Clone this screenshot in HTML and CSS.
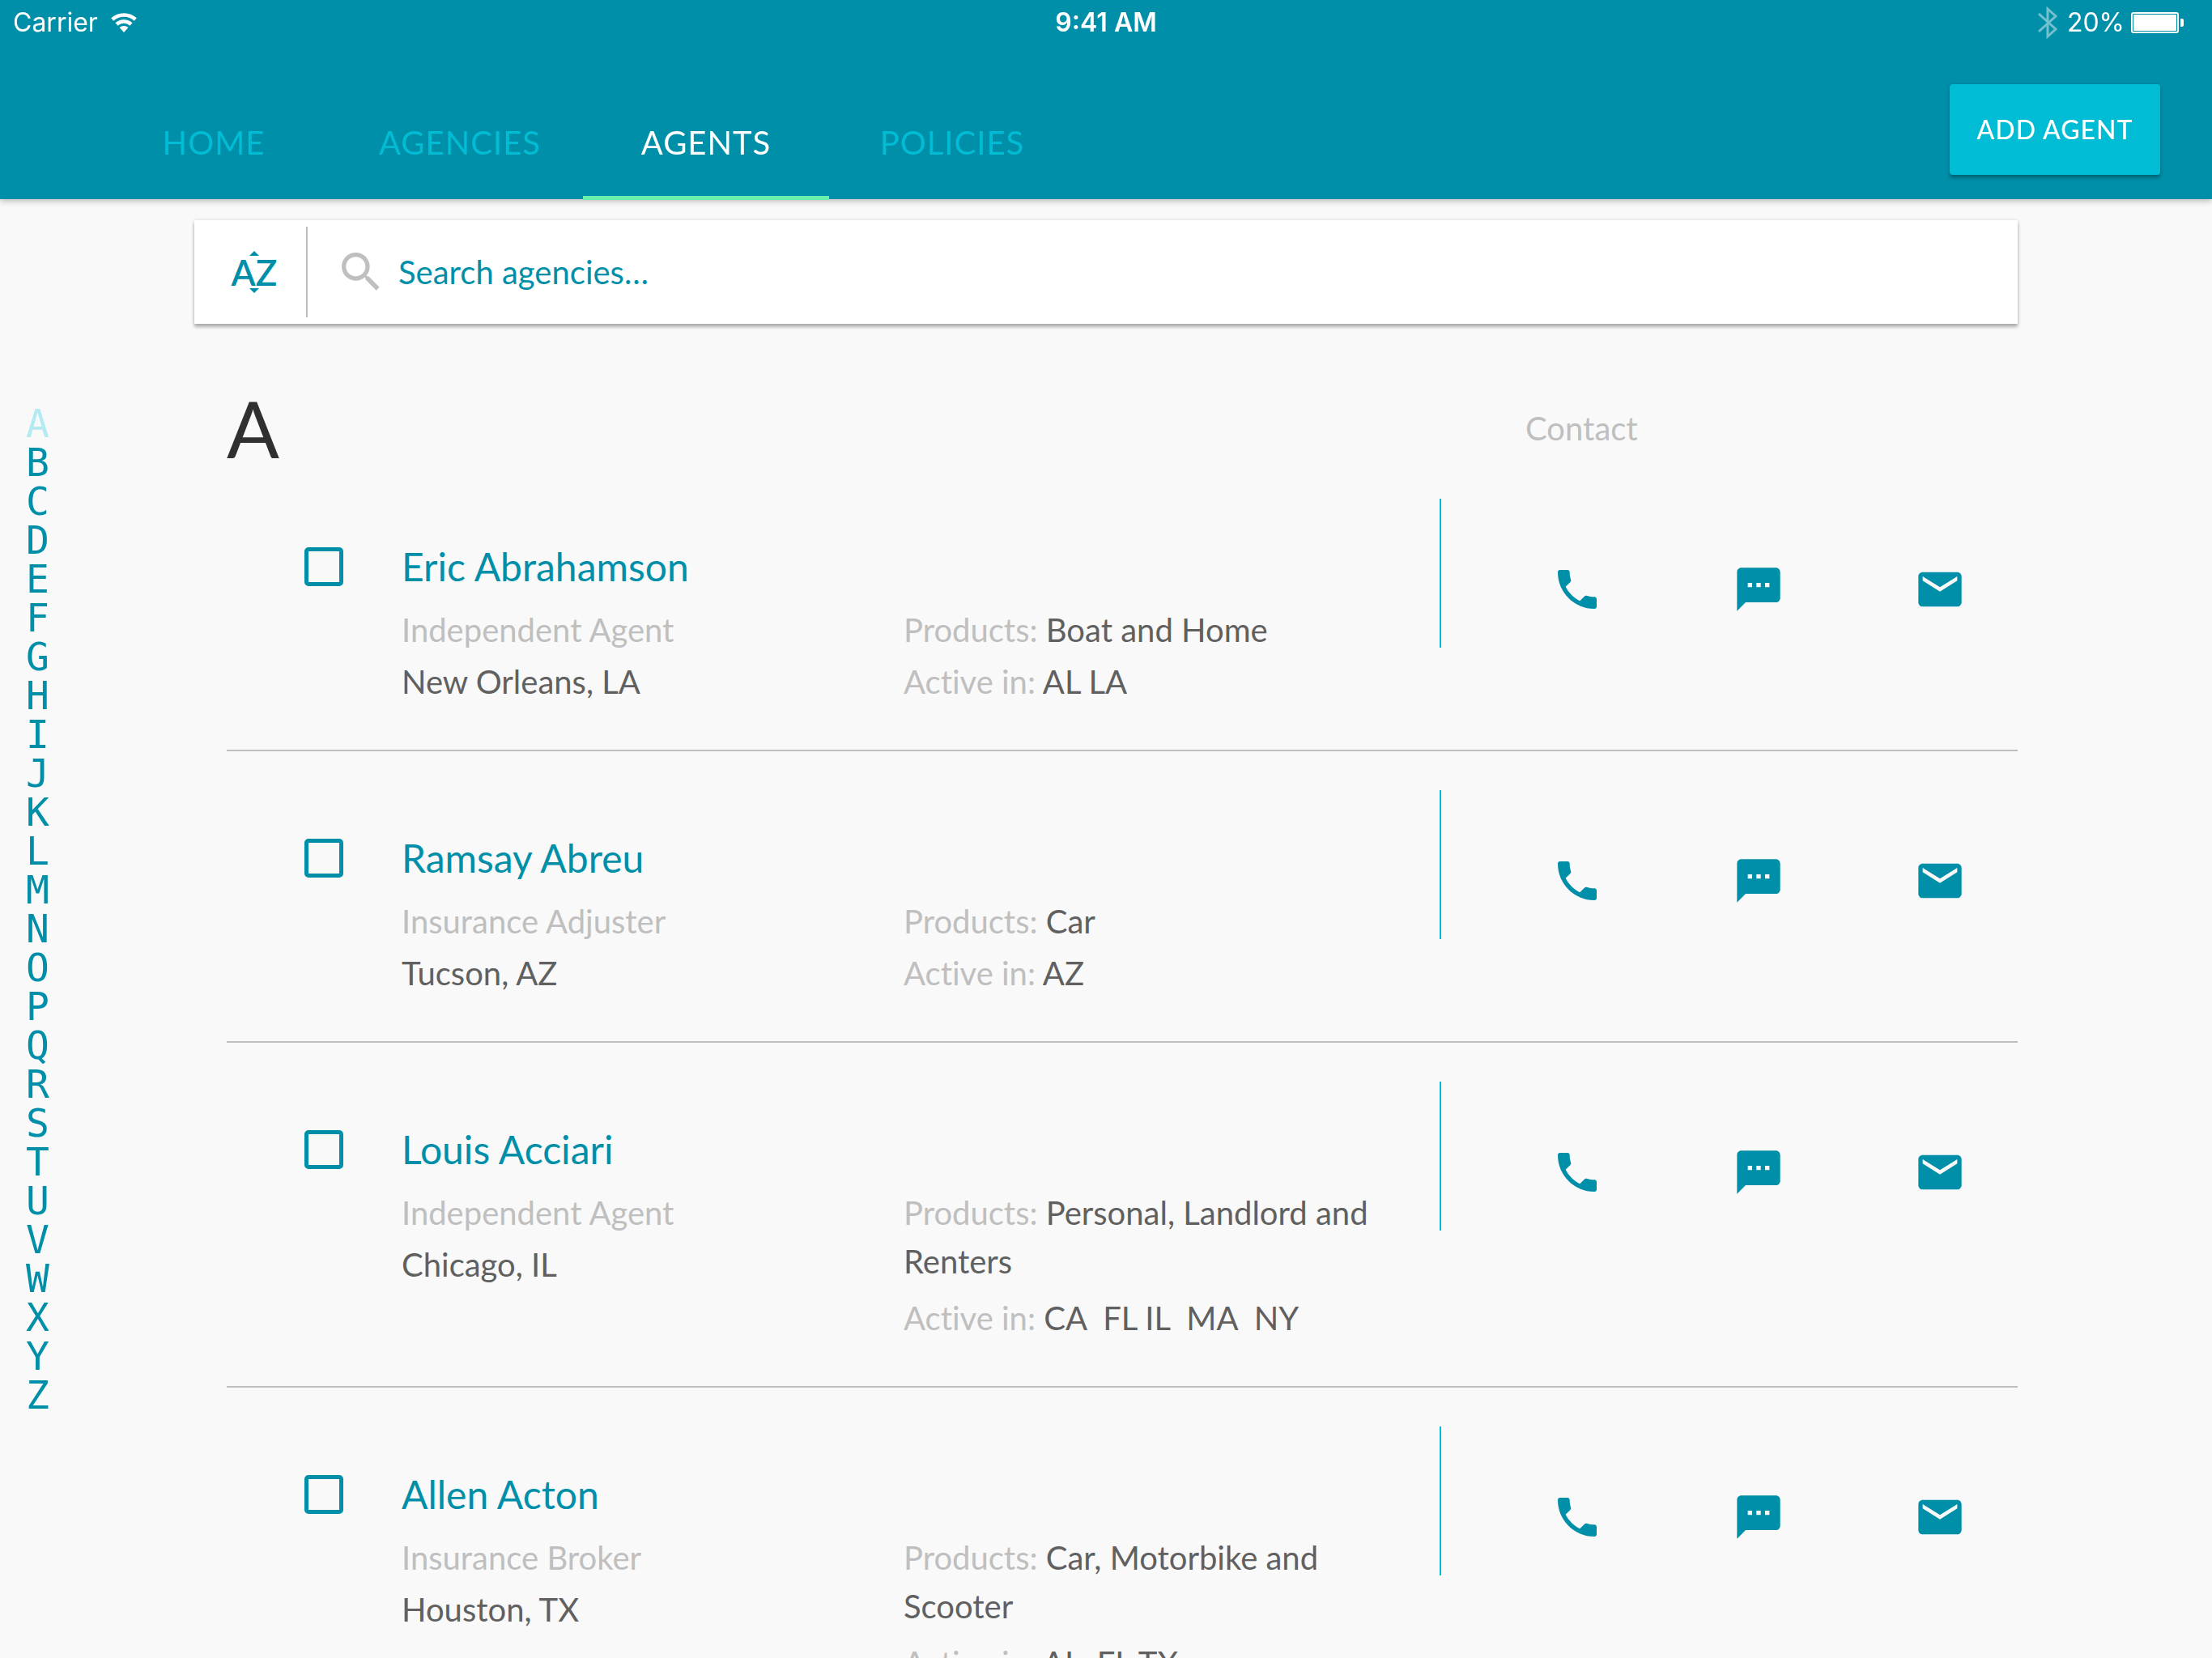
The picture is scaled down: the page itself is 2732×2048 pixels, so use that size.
FILE: index.html
```html
<!DOCTYPE html>
<html lang="en">
<head>
<meta charset="utf-8">
<meta name="viewport" content="width=device-width, initial-scale=1">
<title>Agents</title>
<link rel="stylesheet" href="styles.css">
</head>
<body>
<svg class="sprite" aria-hidden="true">
  <symbol id="phone" viewBox="0 0 24 24"><path d="M6.62 10.79c1.44 2.83 3.76 5.14 6.59 6.59l2.2-2.2c.27-.27.67-.36 1.02-.24 1.12.37 2.33.57 3.57.57.55 0 1 .45 1 1V20c0 .55-.45 1-1 1-9.39 0-17-7.61-17-17 0-.55.45-1 1-1h3.5c.55 0 1 .45 1 1 0 1.25.2 2.45.57 3.57.11.35.03.74-.25 1.02l-2.2 2.2z"/></symbol>
  <symbol id="message" viewBox="0 0 24 24"><path d="M20 2H4c-1.1 0-1.99.9-1.99 2L2 22l4-4h14c1.1 0 2-.9 2-2V4c0-1.1-.9-2-2-2z"/><path class="icon-cut" d="M7 9h2v2H7zM11 9h2v2h-2zM15 9h2v2h-2z"/></symbol>
  <symbol id="mail" viewBox="0 0 24 24"><path d="M20 4H4c-1.1 0-1.99.9-1.99 2L2 18c0 1.1.9 2 2 2h16c1.1 0 2-.9 2-2V6c0-1.1-.9-2-2-2z"/><path class="icon-cut" d="M20 8l-8 5-8-5V6l8 5 8-5v2z"/></symbol>
</svg>

<div class="app">
  <header class="header">
    <div class="status">
      <div class="status-left">
        <span>Carrier</span>
        <svg class="wifi" viewBox="0 0 32 24" aria-hidden="true"><path d="M1.7 8A21.5 21.5 0 0 1 30.3 8M7 14A13.5 13.5 0 0 1 25 14" fill="none" stroke="currentColor" stroke-width="4.6"/><path d="M16 24l-5.4-6A8 8 0 0 1 21.4 18z"/></svg>
      </div>
      <time class="status-time">9:41 AM</time>
      <div class="status-right">
        <svg class="bluetooth" viewBox="0 0 24 40" aria-hidden="true"><path d="M1 9l21 19-10 9V3l10 9L1 31" fill="none" stroke="currentColor" stroke-width="3"/></svg>
        <span>20%</span>
        <svg class="battery" viewBox="0 0 66 26" aria-hidden="true"><rect x="1" y="1" width="57" height="24" rx="2" fill="none" stroke="currentColor" stroke-width="2"/><rect x="3" y="3" width="53" height="20" rx="1"/><path d="M61 8h2q2 0 2 2v6q0 2-2 2h-2z"/></svg>
      </div>
    </div>
    <div class="bar">
      <nav class="tabs">
        <a class="tab" href="#home">HOME</a>
        <a class="tab" href="#agencies">AGENCIES</a>
        <a class="tab tab-active" href="#agents" aria-current="page">AGENTS</a>
        <a class="tab" href="#policies">POLICIES</a>
      </nav>
      <button class="add" type="button">ADD AGENT</button>
    </div>
  </header>

  <div class="body">
    <nav class="index" aria-label="Jump to letter">
      <a class="current" href="#A">A</a><a href="#B">B</a><a href="#C">C</a><a href="#D">D</a><a href="#E">E</a><a href="#F">F</a><a href="#G">G</a><a href="#H">H</a><a href="#I">I</a><a href="#J">J</a><a href="#K">K</a><a href="#L">L</a><a href="#M">M</a><a href="#N">N</a><a href="#O">O</a><a href="#P">P</a><a href="#Q">Q</a><a href="#R">R</a><a href="#S">S</a><a href="#T">T</a><a href="#U">U</a><a href="#V">V</a><a href="#W">W</a><a href="#X">X</a><a href="#Y">Y</a><a href="#Z">Z</a>
    </nav>

    <main class="content">
      <form class="search" role="search">
        <button class="sort" type="button" aria-label="Sort A to Z">
          <svg class="arrow" viewBox="0 0 12 6" aria-hidden="true"><path d="M0 6l6-6 6 6z"/></svg>
          <span>AZ</span>
          <svg class="arrow" viewBox="0 0 12 6" aria-hidden="true"><path d="M0 0l6 6 6-6z"/></svg>
        </button>
        <label class="search-label" for="q" aria-label="Search">
          <svg class="icon" viewBox="0 0 24 24" aria-hidden="true"><path d="M15.5 14h-.79l-.28-.27C15.41 12.59 16 11.11 16 9.5 16 5.91 13.09 3 9.5 3S3 5.91 3 9.5 5.91 16 9.5 16c1.61 0 3.09-.59 4.23-1.57l.27.28v.79l5 4.99L20.49 19l-4.99-5zm-6 0C7.01 14 5 11.99 5 9.5S7.01 5 9.5 5 14 7.01 14 9.5 11.99 14 9.5 14z"/></svg>
        </label>
        <input class="search-input" id="q" type="text" placeholder="Search agencies…">
      </form>

      <section class="group" id="A">
        <div class="group-head">
          <h1 class="letter">A</h1>
          <h2 class="contact-title">Contact</h2>
        </div>

        <article class="agent">
          <div class="pick"><input type="checkbox" id="a1"></div>
          <div class="info">
            <label class="name" for="a1">Eric Abrahamson</label>
            <p class="role">Independent Agent</p>
            <p>New Orleans, LA</p>
          </div>
          <div class="cover">
            <p><span class="key">Products:</span> Boat and Home</p>
            <p><span class="key">Active in:</span> AL LA</p>
          </div>
          <div class="contact">
            <a href="#call" aria-label="Call"><svg class="icon"><use href="#phone"/></svg></a>
            <a href="#message" aria-label="Message"><svg class="icon"><use href="#message"/></svg></a>
            <a href="#mail" aria-label="Email"><svg class="icon"><use href="#mail"/></svg></a>
          </div>
        </article>

        <article class="agent">
          <div class="pick"><input type="checkbox" id="a2"></div>
          <div class="info">
            <label class="name" for="a2">Ramsay Abreu</label>
            <p class="role">Insurance Adjuster</p>
            <p>Tucson, AZ</p>
          </div>
          <div class="cover">
            <p><span class="key">Products:</span> Car</p>
            <p><span class="key">Active in:</span> AZ</p>
          </div>
          <div class="contact">
            <a href="#call" aria-label="Call"><svg class="icon"><use href="#phone"/></svg></a>
            <a href="#message" aria-label="Message"><svg class="icon"><use href="#message"/></svg></a>
            <a href="#mail" aria-label="Email"><svg class="icon"><use href="#mail"/></svg></a>
          </div>
        </article>

        <article class="agent">
          <div class="pick"><input type="checkbox" id="a3"></div>
          <div class="info">
            <label class="name" for="a3">Louis Acciari</label>
            <p class="role">Independent Agent</p>
            <p>Chicago, IL</p>
          </div>
          <div class="cover cover-long">
            <p><span class="key">Products:</span> Personal, Landlord and Renters</p>
            <p><span class="key">Active in:</span> CA&nbsp; FL IL&nbsp; MA&nbsp; NY</p>
          </div>
          <div class="contact">
            <a href="#call" aria-label="Call"><svg class="icon"><use href="#phone"/></svg></a>
            <a href="#message" aria-label="Message"><svg class="icon"><use href="#message"/></svg></a>
            <a href="#mail" aria-label="Email"><svg class="icon"><use href="#mail"/></svg></a>
          </div>
        </article>

        <article class="agent">
          <div class="pick"><input type="checkbox" id="a4"></div>
          <div class="info">
            <label class="name" for="a4">Allen Acton</label>
            <p class="role">Insurance Broker</p>
            <p>Houston, TX</p>
          </div>
          <div class="cover cover-long">
            <p><span class="key">Products:</span> Car, Motorbike and Scooter</p>
            <p><span class="key">Active in:</span> AL&nbsp; FL TX</p>
          </div>
          <div class="contact">
            <a href="#call" aria-label="Call"><svg class="icon"><use href="#phone"/></svg></a>
            <a href="#message" aria-label="Message"><svg class="icon"><use href="#message"/></svg></a>
            <a href="#mail" aria-label="Email"><svg class="icon"><use href="#mail"/></svg></a>
          </div>
        </article>
      </section>
    </main>
  </div>
</div>
</body>
</html>
```
FILE: styles.css
```css
:root {
  --teal: #008fa9;
  --cyan: #00bcd4;
  --grey: #bfbfbf;
  --text: #606060;
  --page: #f9f9f9;
}

* { box-sizing: border-box; }

body {
  margin: 0;
  background: var(--page);
  color: var(--text);
  font: 400 40px/60px Lato, "Liberation Sans", sans-serif;
  font-variant-ligatures: none;
}

p, h1, h2 { margin: 0; font-weight: 400; }
a { color: inherit; text-decoration: none; }
button, input { font: inherit; color: inherit; border: 0; padding: 0; background: none; }
svg { display: block; fill: currentColor; }
.sprite { display: none; }
.icon { width: 64px; height: 64px; }
.icon-cut { fill: var(--page); }

.app {
  display: flex;
  flex-direction: column;
  height: 100vh;
}

/* Header */
.header {
  position: relative;
  z-index: 1;
  flex: none;
  background: var(--teal);
  color: #fff;
  box-shadow: 0 2px 8px rgba(0, 0, 0, .28);
}

.status {
  display: grid;
  grid-template-columns: 1fr auto 1fr;
  align-items: center;
  height: 56px;
  padding: 0 16px;
  font: 400 32px/56px Inter, "Liberation Sans", sans-serif;
}
.status-left, .status-right { display: flex; align-items: center; }
.status-left { gap: 16px; }
.status-right { justify-content: flex-end; gap: 8px; padding-right: 18px; }
.status-time { font-weight: 600; }
.wifi { width: 32px; height: 24px; }
.bluetooth { width: 24px; height: 40px; margin-right: 4px; opacity: .45; }
.battery { width: 66px; height: 26px; }

.bar {
  display: flex;
  justify-content: space-between;
  align-items: flex-end;
  height: 190px;
  padding: 0 64px 0 112px;
}
.tabs { display: flex; margin-bottom: -1px; }
.tab {
  width: 304px;
  padding-bottom: 36px;
  border-bottom: 5px solid transparent;
  color: var(--cyan);
  letter-spacing: 1px;
  text-align: center;
}
.tab-active { color: #fff; border-color: #69f0ae; }
.add {
  align-self: flex-start;
  min-width: 260px;
  height: 112px;
  margin-top: 48px;
  border-radius: 4px;
  background: var(--cyan);
  box-shadow: 0 4px 4px rgba(0, 0, 0, .26), 0 0 4px rgba(0, 0, 0, .12);
  font-size: 32px;
  font-weight: 500;
  letter-spacing: 1px;
}

/* Body */
.body {
  flex: 1;
  min-height: 0;
  display: grid;
  grid-template-columns: 240px minmax(0, 1fr);
  overflow-y: auto;
  scrollbar-width: none;
}

.index {
  position: sticky;
  top: 0;
  align-self: start;
  display: flex;
  flex-direction: column;
  align-items: flex-start;
  padding: 253px 0 0 32px;
  color: var(--teal);
  font: 48px/48px "DejaVu Sans Mono", monospace;
}
.current { color: #b2ebf2; }

.content { padding: 26px 240px 0 0; }

.search {
  display: flex;
  align-items: center;
  height: 128px;
  background: #fff;
  box-shadow: 0 4px 4px rgba(0, 0, 0, .28), 0 0 4px rgba(0, 0, 0, .14);
  color: var(--teal);
}
.sort {
  display: flex;
  flex-direction: column;
  align-items: center;
  justify-content: center;
  width: 140px;
  height: 112px;
  border-right: 2px solid var(--grey);
  padding-left: 10px;
  font-size: 44px;
  font-weight: 600;
  line-height: 40px;
}
.arrow { width: 12px; height: 6px; }
.search-label { margin: 0 14px 0 34px; color: var(--grey); }
.search-input { flex: 1; min-width: 0; height: 100%; outline: 0; }
.search-input::placeholder { color: var(--teal); opacity: 1; }

.group { padding-left: 40px; }
.group-head, .agent {
  display: grid;
  grid-template-columns: 120px 620fr 662fr 714fr;
}
.group-head {
  align-items: center;
  padding: 90px 0 0 96px;
}
.letter {
  grid-column: 1 / 4;
  margin-left: -96px;
  color: #303030;
  font-size: 96px;
  line-height: 78px;
}
.contact-title { padding-left: 106px; color: var(--grey); font-size: 40px; }

.agent {
  padding-left: 96px;
  border-bottom: 2px solid var(--grey);
}
.pick { padding-top: 108px; }
.pick input {
  display: block;
  appearance: none;
  width: 48px;
  height: 48px;
  margin: 0;
  border: 5px solid var(--teal);
  border-radius: 5px;
}
.pick input:checked { background: var(--teal); }
.info { padding: 100px 0 52px; line-height: 64px; }
.name {
  display: block;
  margin-bottom: 14px;
  color: var(--teal);
  font-size: 48px;
}
.role, .key { color: var(--grey); }
.cover {
  display: flex;
  flex-direction: column;
  gap: 4px;
  padding: 180px 48px 54px 0;
}
.cover-long { gap: 10px; }
.contact {
  display: flex;
  align-self: start;
  justify-content: space-between;
  height: 184px;
  margin-top: 48px;
  padding: 80px 64px 0 136px;
  border-left: 2px solid var(--cyan);
  color: var(--teal);
}
```
